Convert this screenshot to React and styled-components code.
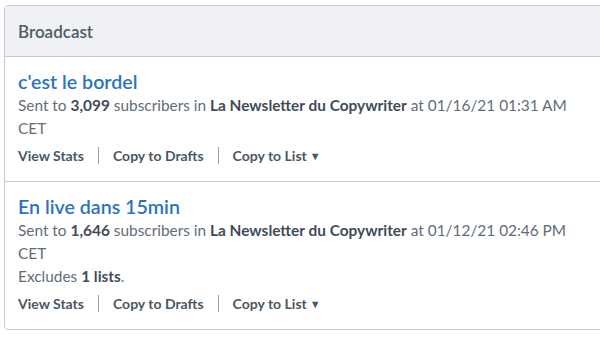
import React from 'react';
import styled, { createGlobalStyle } from 'styled-components';

const GlobalStyle = createGlobalStyle`
  html, body {
    margin: 0;
    padding: 0;
    background: #ffffff;
    overflow: hidden;
  }
  body {
    font-family: Lato, "Open Sans", "Liberation Sans", sans-serif;
    -webkit-font-smoothing: antialiased;
  }
`;

const Page = styled.div`
  padding: 5px 0 0 4px;
  width: 640px;
`;

const Card = styled.div`
  border: 1px solid #c3cad3;
  border-radius: 4px;
  background: #ffffff;
  overflow: hidden;
`;

const Header = styled.div`
  height: 50px;
  display: flex;
  align-items: center;
  padding: 0 13px;
  background: #eff1f4;
  border-bottom: 1px solid #c3cad3;
  color: #4e5b68;
  font-size: 17px;
  font-weight: 600;
`;

const Item = styled.div`
  padding: 13px 13px 14px 13px;
  & + & {
    border-top: 1px solid #c3cad3;
  }
`;

const Title = styled.a`
  display: block;
  color: #2c73bf;
  font-size: 19.6px;
  font-weight: 600;
  line-height: 24px;
  text-decoration: none;
`;

const Line = styled.div`
  max-width: 575px;
  color: #5f6d7b;
  font-size: 15.4px;
  line-height: 23px;

  b {
    color: #3f4c59;
    font-weight: 700;
  }
`;

const Actions = styled.div`
  display: flex;
  align-items: center;
  margin-top: 4px;
  height: 23px;
  color: #4a5765;
  font-size: 14px;
  font-weight: 700;
`;

const Action = styled.span`
  white-space: nowrap;
`;

const Divider = styled.span`
  width: 1px;
  height: 17px;
  margin: 0 14px;
  background: #9aa4ae;
`;

const Caret = styled.span`
  font-size: 11px;
  margin-left: 3px;
  position: relative;
  top: -1px;
`;

const broadcasts = [
  {
    title: "c'est le bordel",
    count: '3,099',
    date: '01/16/21 01:31 AM',
  },
  {
    title: 'En live dans 15min',
    count: '1,646',
    date: '01/12/21 02:46 PM',
    excludes: 1,
  },
];

function BroadcastItem({ item }) {
  return (
    <Item>
      <Title href="#">{item.title}</Title>
      <Line>
        Sent to <b>{item.count}</b> subscribers in <b>La Newsletter du Copywriter</b> at {item.date} CET
      </Line>
      {item.excludes && (
        <Line>
          Excludes <b>{item.excludes} lists</b>.
        </Line>
      )}
      <Actions>
        <Action>View Stats</Action>
        <Divider />
        <Action>Copy to Drafts</Action>
        <Divider />
        <Action>
          Copy to List<Caret>▼</Caret>
        </Action>
      </Actions>
    </Item>
  );
}

export default function App() {
  return (
    <Page>
      <GlobalStyle />
      <Card>
        <Header>Broadcast</Header>
        {broadcasts.map((b) => (
          <BroadcastItem key={b.title} item={b} />
        ))}
      </Card>
    </Page>
  );
}
